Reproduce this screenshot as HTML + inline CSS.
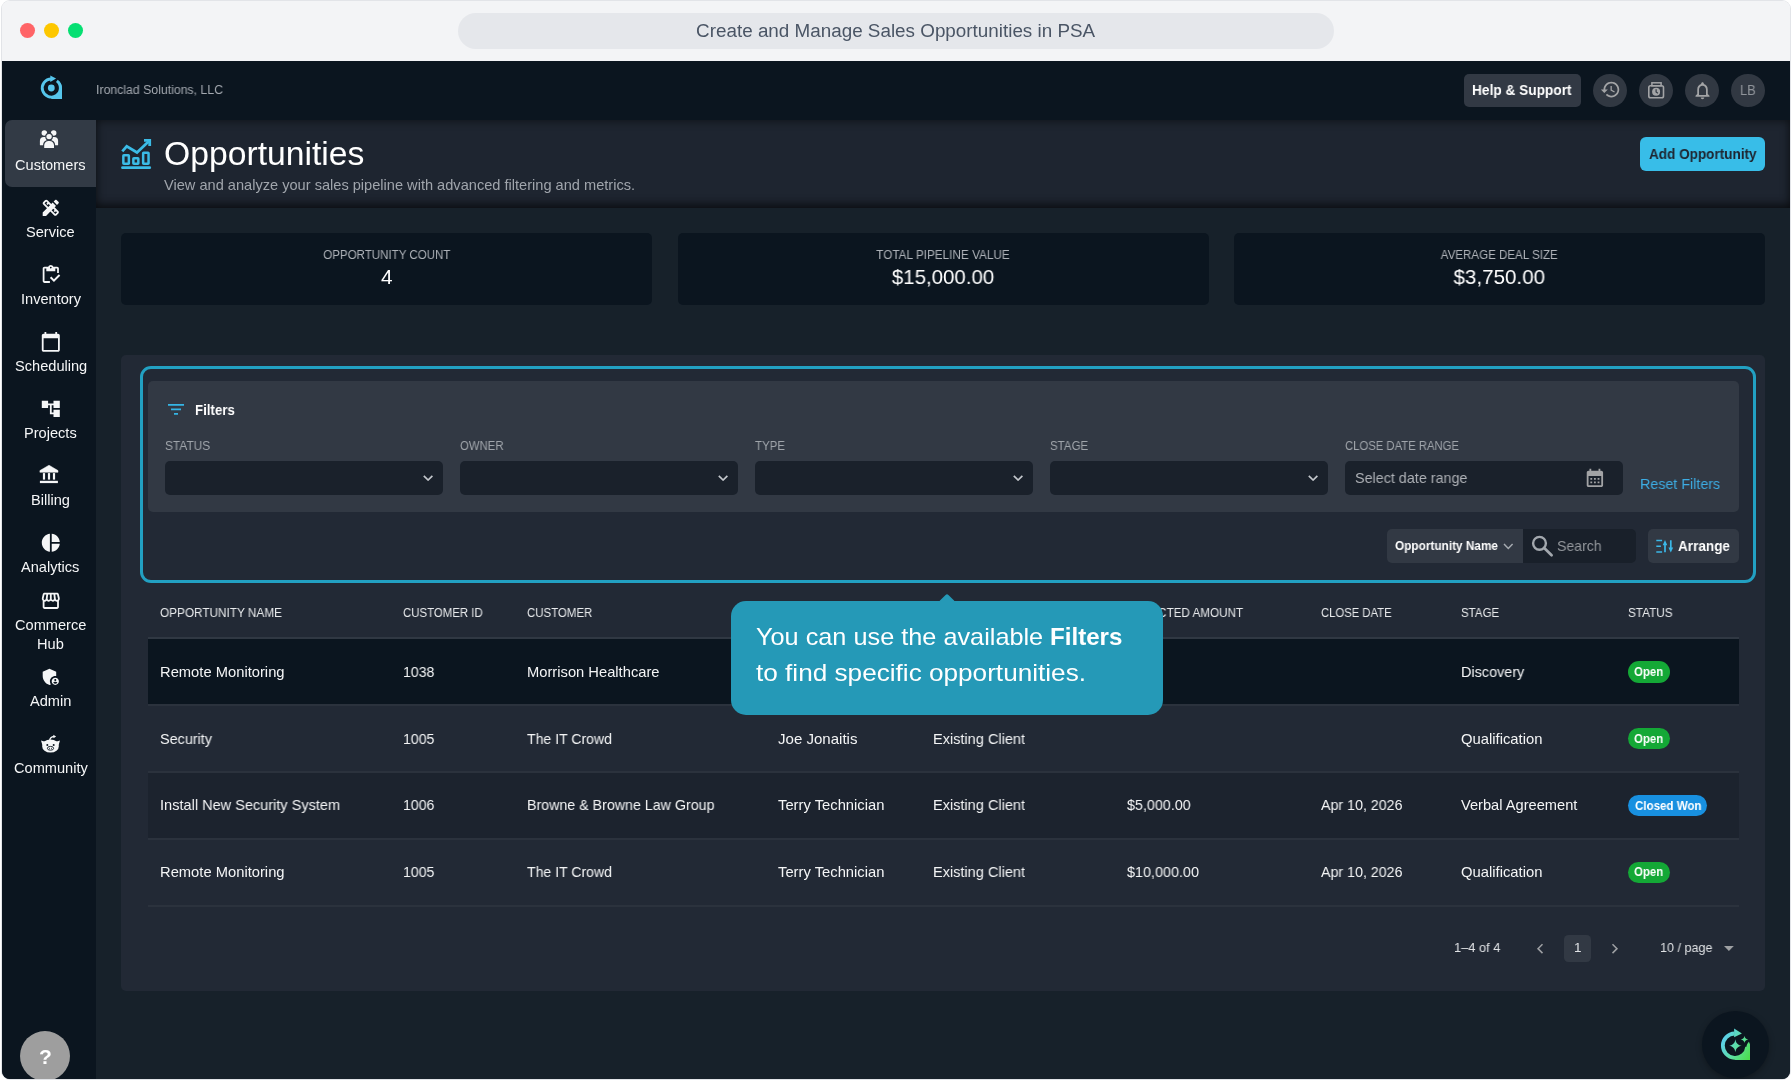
<!DOCTYPE html>
<html><head><meta charset="utf-8"><title>Opportunities</title>
<style>
html,body{margin:0;padding:0;}
body{width:1792px;height:1080px;overflow:hidden;background:#fff;font-family:"Liberation Sans",sans-serif;position:relative;}
.b{position:absolute;box-sizing:border-box;}
.t{position:absolute;white-space:nowrap;display:block;will-change:transform;}
#win{position:absolute;left:2px;top:1px;width:1788px;height:1077.5px;border-radius:8px;overflow:hidden;background:linear-gradient(#f3f4f6 0,#f3f4f6 60px,#0b151f 60px,#0b151f 100%);box-shadow:0 0 0 1px #e2e4e8;}
#in{position:absolute;left:-2px;top:-1px;width:1792px;height:1080px;}
</style></head><body>
<div id="win"><div id="in">
<div class="b" style="left:0px;top:0px;width:1792px;height:61px;background:#f3f4f6;border-radius:0px;"></div>
<div class="b" style="left:19.7px;top:22.7px;width:15.5px;height:15.5px;background:#ff6467;border-radius:8px;"></div>
<div class="b" style="left:43.7px;top:22.7px;width:15.5px;height:15.5px;background:#fdc700;border-radius:8px;"></div>
<div class="b" style="left:67.7px;top:22.7px;width:15.5px;height:15.5px;background:#05df72;border-radius:8px;"></div>
<div class="b" style="left:458px;top:13px;width:876px;height:36px;background:#e5e7eb;border-radius:18px;"></div>
<span class="t" style="left:705.38px;top:19.50px;font-size:18px;line-height:23px;color:#4a5565;font-weight:400;transform:scaleX(1.0466);transform-origin:center center;">Create and Manage Sales Opportunities in PSA</span>
<div class="b" style="left:0px;top:61px;width:1792px;height:59px;background:#0b151f;border-radius:0px;"></div>
<div class="b" style="left:0px;top:120px;width:96px;height:960px;background:#0b151f;border-radius:0px;"></div>
<div class="b" style="left:96px;top:120px;width:1696px;height:960px;background:#17212a;border-radius:0px;"></div>
<span class="t" style="left:96.40px;top:82.00px;font-size:12.5px;line-height:16px;color:#a4a9b0;font-weight:400;transform:scaleX(0.9826);transform-origin:left center;">Ironclad Solutions, LLC</span>
<div class="b" style="left:1464px;top:74px;width:117px;height:33px;background:#323944;border-radius:5px;"></div>
<span class="t" style="left:1472.40px;top:80.50px;font-size:14.6px;line-height:19px;color:#fff;font-weight:700;transform:scaleX(0.9374);transform-origin:left center;">Help &amp; Support</span>
<div class="b" style="left:1593.2px;top:73.5px;width:33.6px;height:33.6px;background:#313842;border-radius:17px;"></div>
<div class="b" style="left:1639.2px;top:73.5px;width:33.6px;height:33.6px;background:#313842;border-radius:17px;"></div>
<div class="b" style="left:1685.2px;top:73.5px;width:33.6px;height:33.6px;background:#313842;border-radius:17px;"></div>
<div class="b" style="left:1731.2px;top:73.5px;width:33.6px;height:33.6px;background:#313842;border-radius:17px;"></div>
<span class="t" style="left:1739.37px;top:80.50px;font-size:14.6px;line-height:19px;color:#90949a;font-weight:400;transform:scaleX(0.8959);transform-origin:center center;">LB</span>
<div class="b" style="left:96px;top:120px;width:1694px;height:87.9px;background:#1e2530;border-radius:0px;box-shadow:inset 0 0 9px 1px rgba(0,0,0,.5),inset 0 -9px 10px -5px rgba(0,0,0,.38);"></div>
<span class="t" style="left:164.20px;top:132.00px;font-size:33.3px;line-height:43px;color:#fff;font-weight:400;transform:scaleX(1.0118);transform-origin:left center;">Opportunities</span>
<span class="t" style="left:163.60px;top:175.50px;font-size:14.6px;line-height:19px;color:#a0a5ac;font-weight:400;transform:scaleX(0.9999);transform-origin:left center;">View and analyze your sales pipeline with advanced filtering and metrics.</span>
<div class="b" style="left:1640px;top:137px;width:125px;height:34px;background:#38bde8;border-radius:6px;"></div>
<span class="t" style="left:1648.60px;top:144.50px;font-size:14.6px;line-height:19px;color:#1e2530;font-weight:700;transform:scaleX(0.9278);transform-origin:left center;">Add Opportunity</span>
<div class="b" style="left:121.0px;top:233px;width:531.4px;height:71.5px;background:#0b151f;border-radius:5px;"></div>
<span class="t" style="left:317.83px;top:247.00px;font-size:12.5px;line-height:16px;color:#aeb2b8;font-weight:400;transform:scaleX(0.9234);transform-origin:center center;">OPPORTUNITY COUNT</span>
<span class="t" style="left:380.92px;top:263.00px;font-size:20.8px;line-height:27px;color:#fff;font-weight:400;transform:scaleX(1.0000);transform-origin:center center;">4</span>
<div class="b" style="left:677.5px;top:233px;width:531.4px;height:71.5px;background:#0b151f;border-radius:5px;"></div>
<span class="t" style="left:872.22px;top:247.00px;font-size:12.5px;line-height:16px;color:#aeb2b8;font-weight:400;transform:scaleX(0.9411);transform-origin:center center;">TOTAL PIPELINE VALUE</span>
<span class="t" style="left:891.15px;top:263.00px;font-size:20.8px;line-height:27px;color:#fff;font-weight:400;transform:scaleX(0.9836);transform-origin:center center;">$15,000.00</span>
<div class="b" style="left:1234.0px;top:233px;width:531.4px;height:71.5px;background:#0b151f;border-radius:5px;"></div>
<span class="t" style="left:1436.48px;top:247.00px;font-size:12.5px;line-height:16px;color:#aeb2b8;font-weight:400;transform:scaleX(0.9254);transform-origin:center center;">AVERAGE DEAL SIZE</span>
<span class="t" style="left:1453.43px;top:263.00px;font-size:20.8px;line-height:27px;color:#fff;font-weight:400;transform:scaleX(0.9888);transform-origin:center center;">$3,750.00</span>
<div class="b" style="left:121.3px;top:355px;width:1643.7px;height:636px;background:#222935;border-radius:5px;"></div>
<div class="b" style="left:140px;top:366.3px;width:1616.2px;height:216.9px;background:transparent;border-radius:11px;border:3.2px solid #22a0c2;"></div>
<div class="b" style="left:148px;top:381px;width:1590.5px;height:131px;background:#323944;border-radius:5px;"></div>
<span class="t" style="left:195.30px;top:400.50px;font-size:14.6px;line-height:19px;color:#fff;font-weight:700;transform:scaleX(0.9084);transform-origin:left center;">Filters</span>
<span class="t" style="left:165.40px;top:438.00px;font-size:12.5px;line-height:16px;color:#a0a5ab;font-weight:400;transform:scaleX(0.9545);transform-origin:left center;">STATUS</span>
<div class="b" style="left:165px;top:461px;width:278px;height:34px;background:#1a212b;border-radius:5px;"></div>
<span class="t" style="left:460.40px;top:438.00px;font-size:12.5px;line-height:16px;color:#a0a5ab;font-weight:400;transform:scaleX(0.9079);transform-origin:left center;">OWNER</span>
<div class="b" style="left:460px;top:461px;width:278px;height:34px;background:#1a212b;border-radius:5px;"></div>
<span class="t" style="left:755.40px;top:438.00px;font-size:12.5px;line-height:16px;color:#a0a5ab;font-weight:400;transform:scaleX(0.9189);transform-origin:left center;">TYPE</span>
<div class="b" style="left:755px;top:461px;width:278px;height:34px;background:#1a212b;border-radius:5px;"></div>
<span class="t" style="left:1050.40px;top:438.00px;font-size:12.5px;line-height:16px;color:#a0a5ab;font-weight:400;transform:scaleX(0.9217);transform-origin:left center;">STAGE</span>
<div class="b" style="left:1050px;top:461px;width:278px;height:34px;background:#1a212b;border-radius:5px;"></div>
<span class="t" style="left:1345.40px;top:438.00px;font-size:12.5px;line-height:16px;color:#a0a5ab;font-weight:400;transform:scaleX(0.9034);transform-origin:left center;">CLOSE DATE RANGE</span>
<div class="b" style="left:1345px;top:461px;width:278px;height:34px;background:#1a212b;border-radius:5px;"></div>
<span class="t" style="left:1354.80px;top:468.50px;font-size:14.6px;line-height:19px;color:#aeb1b6;font-weight:400;transform:scaleX(0.9830);transform-origin:left center;">Select date range</span>
<span class="t" style="left:1639.60px;top:474.50px;font-size:14.6px;line-height:19px;color:#3dade4;font-weight:400;transform:scaleX(0.9787);transform-origin:left center;">Reset Filters</span>
<div class="b" style="left:1387px;top:529px;width:135.6px;height:33.6px;background:#323944;border-radius:0px;border-radius:5px 0 0 5px;"></div>
<span class="t" style="left:1395.30px;top:538.00px;font-size:12.5px;line-height:16px;color:#fff;font-weight:700;transform:scaleX(0.9446);transform-origin:left center;">Opportunity Name</span>
<div class="b" style="left:1522.6px;top:529px;width:113px;height:33.6px;background:#19202a;border-radius:0px;border-radius:0 5px 5px 0;"></div>
<span class="t" style="left:1557.30px;top:536.50px;font-size:14.6px;line-height:19px;color:#93979c;font-weight:400;transform:scaleX(0.9662);transform-origin:left center;">Search</span>
<div class="b" style="left:1648.2px;top:529px;width:90.6px;height:33.6px;background:#323944;border-radius:5px;"></div>
<span class="t" style="left:1678.00px;top:536.50px;font-size:14.6px;line-height:19px;color:#fff;font-weight:700;transform:scaleX(0.9288);transform-origin:left center;">Arrange</span>
<span class="t" style="left:160.00px;top:605.00px;font-size:12.5px;line-height:16px;color:#e8eaec;font-weight:400;transform:scaleX(0.9426);transform-origin:left center;">OPPORTUNITY NAME</span>
<span class="t" style="left:402.80px;top:605.00px;font-size:12.5px;line-height:16px;color:#e8eaec;font-weight:400;transform:scaleX(0.9132);transform-origin:left center;">CUSTOMER ID</span>
<span class="t" style="left:527.00px;top:605.00px;font-size:12.5px;line-height:16px;color:#e8eaec;font-weight:400;transform:scaleX(0.9158);transform-origin:left center;">CUSTOMER</span>
<span class="t" style="left:778.50px;top:605.00px;font-size:12.5px;line-height:16px;color:#e8eaec;font-weight:400;transform:scaleX(0.9079);transform-origin:left center;">OWNER</span>
<span class="t" style="left:933.00px;top:605.00px;font-size:12.5px;line-height:16px;color:#e8eaec;font-weight:400;transform:scaleX(0.9189);transform-origin:left center;">TYPE</span>
<span class="t" style="left:1127.00px;top:605.00px;font-size:12.5px;line-height:16px;color:#e8eaec;font-weight:400;transform:scaleX(0.9330);transform-origin:left center;">EXPECTED AMOUNT</span>
<span class="t" style="left:1320.90px;top:605.00px;font-size:12.5px;line-height:16px;color:#e8eaec;font-weight:400;transform:scaleX(0.9021);transform-origin:left center;">CLOSE DATE</span>
<span class="t" style="left:1461.00px;top:605.00px;font-size:12.5px;line-height:16px;color:#e8eaec;font-weight:400;transform:scaleX(0.9217);transform-origin:left center;">STAGE</span>
<span class="t" style="left:1628.30px;top:605.00px;font-size:12.5px;line-height:16px;color:#e8eaec;font-weight:400;transform:scaleX(0.9419);transform-origin:left center;">STATUS</span>
<div class="b" style="left:147.7px;top:637px;width:1591px;height:2px;background:#303843;border-radius:0px;"></div>
<div class="b" style="left:147.7px;top:639px;width:1591px;height:65.45000000000005px;background:#0b151f;border-radius:0px;"></div>
<div class="b" style="left:147.7px;top:704.45px;width:1591px;height:2px;background:#2b323d;border-radius:0px;"></div>
<span class="t" style="left:160.00px;top:662.50px;font-size:14.6px;line-height:19px;color:#f4f5f6;font-weight:400;transform:scaleX(1.0101);transform-origin:left center;">Remote Monitoring</span>
<span class="t" style="left:403.10px;top:662.50px;font-size:14.6px;line-height:19px;color:#f4f5f6;font-weight:400;transform:scaleX(0.9698);transform-origin:left center;">1038</span>
<span class="t" style="left:527.00px;top:662.50px;font-size:14.6px;line-height:19px;color:#f4f5f6;font-weight:400;transform:scaleX(1.0087);transform-origin:left center;">Morrison Healthcare</span>
<span class="t" style="left:1461.00px;top:662.50px;font-size:14.6px;line-height:19px;color:#f4f5f6;font-weight:400;transform:scaleX(0.9877);transform-origin:left center;">Discovery</span>
<div class="b" style="left:1628px;top:661.3px;width:42px;height:21.3px;background:#14a836;border-radius:11px;"></div>
<span class="t" style="left:1634.30px;top:664.00px;font-size:12.5px;line-height:16px;color:#fff;font-weight:700;transform:scaleX(0.9172);transform-origin:left center;">Open</span>
<div class="b" style="left:147.7px;top:706.45px;width:1591px;height:64.75px;background:#222935;border-radius:0px;"></div>
<div class="b" style="left:147.7px;top:771.2px;width:1591px;height:2px;background:#2b323d;border-radius:0px;"></div>
<span class="t" style="left:160.00px;top:729.50px;font-size:14.6px;line-height:19px;color:#f4f5f6;font-weight:400;transform:scaleX(0.9859);transform-origin:left center;">Security</span>
<span class="t" style="left:403.10px;top:729.50px;font-size:14.6px;line-height:19px;color:#f4f5f6;font-weight:400;transform:scaleX(0.9698);transform-origin:left center;">1005</span>
<span class="t" style="left:527.00px;top:729.50px;font-size:14.6px;line-height:19px;color:#f4f5f6;font-weight:400;transform:scaleX(0.9640);transform-origin:left center;">The IT Crowd</span>
<span class="t" style="left:777.70px;top:729.50px;font-size:14.6px;line-height:19px;color:#f4f5f6;font-weight:400;transform:scaleX(1.0311);transform-origin:left center;">Joe Jonaitis</span>
<span class="t" style="left:932.70px;top:729.50px;font-size:14.6px;line-height:19px;color:#f4f5f6;font-weight:400;transform:scaleX(0.9945);transform-origin:left center;">Existing Client</span>
<span class="t" style="left:1461.00px;top:729.50px;font-size:14.6px;line-height:19px;color:#f4f5f6;font-weight:400;transform:scaleX(1.0144);transform-origin:left center;">Qualification</span>
<div class="b" style="left:1628px;top:728.05px;width:42px;height:21.3px;background:#14a836;border-radius:11px;"></div>
<span class="t" style="left:1634.30px;top:731.00px;font-size:12.5px;line-height:16px;color:#fff;font-weight:700;transform:scaleX(0.9172);transform-origin:left center;">Open</span>
<div class="b" style="left:147.7px;top:773.2px;width:1591px;height:64.75px;background:#1c232e;border-radius:0px;"></div>
<div class="b" style="left:147.7px;top:837.95px;width:1591px;height:2px;background:#2b323d;border-radius:0px;"></div>
<span class="t" style="left:160.00px;top:795.50px;font-size:14.6px;line-height:19px;color:#f4f5f6;font-weight:400;transform:scaleX(0.9959);transform-origin:left center;">Install New Security System</span>
<span class="t" style="left:403.10px;top:795.50px;font-size:14.6px;line-height:19px;color:#f4f5f6;font-weight:400;transform:scaleX(0.9698);transform-origin:left center;">1006</span>
<span class="t" style="left:527.00px;top:795.50px;font-size:14.6px;line-height:19px;color:#f4f5f6;font-weight:400;transform:scaleX(0.9749);transform-origin:left center;">Browne &amp; Browne Law Group</span>
<span class="t" style="left:777.70px;top:795.50px;font-size:14.6px;line-height:19px;color:#f4f5f6;font-weight:400;transform:scaleX(1.0121);transform-origin:left center;">Terry Technician</span>
<span class="t" style="left:932.70px;top:795.50px;font-size:14.6px;line-height:19px;color:#f4f5f6;font-weight:400;transform:scaleX(0.9945);transform-origin:left center;">Existing Client</span>
<span class="t" style="left:1127.30px;top:795.50px;font-size:14.6px;line-height:19px;color:#f4f5f6;font-weight:400;transform:scaleX(0.9807);transform-origin:left center;">$5,000.00</span>
<span class="t" style="left:1321.00px;top:795.50px;font-size:14.6px;line-height:19px;color:#f4f5f6;font-weight:400;transform:scaleX(0.9748);transform-origin:left center;">Apr 10, 2026</span>
<span class="t" style="left:1461.00px;top:795.50px;font-size:14.6px;line-height:19px;color:#f4f5f6;font-weight:400;transform:scaleX(1.0028);transform-origin:left center;">Verbal Agreement</span>
<div class="b" style="left:1628px;top:794.8px;width:79.2px;height:21.3px;background:#1890e0;border-radius:11px;"></div>
<span class="t" style="left:1634.50px;top:798.00px;font-size:12.5px;line-height:16px;color:#fff;font-weight:700;transform:scaleX(0.9237);transform-origin:left center;">Closed Won</span>
<div class="b" style="left:147.7px;top:839.95px;width:1591px;height:64.75px;background:#222935;border-radius:0px;"></div>
<div class="b" style="left:147.7px;top:904.7px;width:1591px;height:2px;background:#2b323d;border-radius:0px;"></div>
<span class="t" style="left:160.00px;top:862.50px;font-size:14.6px;line-height:19px;color:#f4f5f6;font-weight:400;transform:scaleX(1.0101);transform-origin:left center;">Remote Monitoring</span>
<span class="t" style="left:403.10px;top:862.50px;font-size:14.6px;line-height:19px;color:#f4f5f6;font-weight:400;transform:scaleX(0.9698);transform-origin:left center;">1005</span>
<span class="t" style="left:527.00px;top:862.50px;font-size:14.6px;line-height:19px;color:#f4f5f6;font-weight:400;transform:scaleX(0.9640);transform-origin:left center;">The IT Crowd</span>
<span class="t" style="left:777.70px;top:862.50px;font-size:14.6px;line-height:19px;color:#f4f5f6;font-weight:400;transform:scaleX(1.0121);transform-origin:left center;">Terry Technician</span>
<span class="t" style="left:932.70px;top:862.50px;font-size:14.6px;line-height:19px;color:#f4f5f6;font-weight:400;transform:scaleX(0.9945);transform-origin:left center;">Existing Client</span>
<span class="t" style="left:1127.30px;top:862.50px;font-size:14.6px;line-height:19px;color:#f4f5f6;font-weight:400;transform:scaleX(0.9853);transform-origin:left center;">$10,000.00</span>
<span class="t" style="left:1321.00px;top:862.50px;font-size:14.6px;line-height:19px;color:#f4f5f6;font-weight:400;transform:scaleX(0.9748);transform-origin:left center;">Apr 10, 2026</span>
<span class="t" style="left:1461.00px;top:862.50px;font-size:14.6px;line-height:19px;color:#f4f5f6;font-weight:400;transform:scaleX(1.0144);transform-origin:left center;">Qualification</span>
<div class="b" style="left:1628px;top:861.55px;width:42px;height:21.3px;background:#14a836;border-radius:11px;"></div>
<span class="t" style="left:1634.30px;top:864.00px;font-size:12.5px;line-height:16px;color:#fff;font-weight:700;transform:scaleX(0.9172);transform-origin:left center;">Open</span>
<span class="t" style="left:1453.60px;top:938.50px;font-size:13.5px;line-height:18px;color:#e0e2e5;font-weight:400;transform:scaleX(0.9510);transform-origin:left center;">1–4 of 4</span>
<div class="b" style="left:1564.3px;top:935px;width:26.6px;height:27px;background:#323944;border-radius:4.5px;"></div>
<span class="t" style="left:1573.85px;top:938.50px;font-size:13.5px;line-height:18px;color:#e0e2e5;font-weight:400;transform:scaleX(1.0000);transform-origin:center center;">1</span>
<span class="t" style="left:1659.80px;top:938.50px;font-size:13.5px;line-height:18px;color:#e0e2e5;font-weight:400;transform:scaleX(0.9325);transform-origin:left center;">10 / page</span>
<div class="b" style="left:941px;top:596px;width:12px;height:12px;background:#2599b7;border-radius:2px;transform:rotate(45deg);"></div>
<div class="b" style="left:731px;top:601px;width:432px;height:113.6px;background:#2599b7;border-radius:15px;"></div>
<span class="t" style="left:755.60px;top:621.00px;font-size:24px;line-height:31px;color:#fff;font-weight:400;transform:scaleX(1.0532);transform-origin:left center;">You can use the available </span>
<span class="t" style="left:1049.80px;top:621.00px;font-size:24px;line-height:31px;color:#fff;font-weight:700;transform:scaleX(1.0052);transform-origin:left center;">Filters</span>
<span class="t" style="left:755.80px;top:657.00px;font-size:24px;line-height:31px;color:#fff;font-weight:400;transform:scaleX(1.0897);transform-origin:left center;">to find specific opportunities.</span>
<div class="b" style="left:20px;top:1030.8px;width:50px;height:50px;background:#9e9e9e;border-radius:25px;"></div>
<span class="t" style="left:38.59px;top:1043.00px;font-size:21px;line-height:27px;color:#fff;font-weight:700;transform:scaleX(1.0000);transform-origin:center center;">?</span>
<div class="b" style="left:1702px;top:1011px;width:67px;height:67px;background:#0b151f;border-radius:34px;box-shadow:0 2px 6px rgba(0,0,0,.3);"></div>
<div class="b" style="left:5px;top:120px;width:91px;height:67px;background:#323a45;border-radius:0px;border-radius:7px 0 0 7px;"></div>
<span class="t" style="left:15.41px;top:155.50px;font-size:14.6px;line-height:19px;color:#f5f6f7;font-weight:400;transform:scaleX(1.0000);transform-origin:center center;">Customers</span>
<svg class="b" style="left:40px;top:196.9px;" width="21.6" height="21.6" viewBox="0 0 24 24"><path fill="#f5f6f7" d="M16.24 11.51l1.57-1.57-3.75-3.75-1.57 1.57-4.14-4.13c-.78-.78-2.05-.78-2.83 0l-1.9 1.9c-.78.78-.78 2.05 0 2.83l4.13 4.13L3 17.25V21h3.750l4.760-4.760 4.130 4.130c.95.95 2.23.6 2.83 0l1.9-1.9c.78-.78.78-2.05 0-2.83l-4.130-4.130zm-7.060-.440L5.040 6.940l1.890-1.900L8.200 6.310 7.020 7.500l1.410 1.410 1.190-1.190 1.450 1.450-1.890 1.900zm7.880 7.890l-4.130-4.130 1.900-1.900 1.450 1.450-1.190 1.190 1.410 1.410 1.190-1.190 1.270 1.270-1.900 1.900zM20.710 7.040c.39-.39.39-1.020 0-1.410l-2.340-2.340c-.47-.47-1.120-.29-1.410 0l-1.830 1.830 3.750 3.750 1.830-1.830z"/></svg>
<span class="t" style="left:26.36px;top:222.50px;font-size:14.6px;line-height:19px;color:#f5f6f7;font-weight:400;transform:scaleX(1.0000);transform-origin:center center;">Service</span>
<svg class="b" style="left:40px;top:263.9px;" width="21.6" height="21.6" viewBox="0 0 24 24"><path fill="#f5f6f7" d="M5 5h2v3h10V5h2v5h2V5c0-1.100-.9-2-2-2h-4.180C14.400 1.840 13.300 1 12 1s-2.400.84-2.820 2H5c-1.100 0-2 .9-2 2v14c0 1.100.9 2 2 2h6v-2H5V5zm7-2c.55 0 1 .45 1 1s-.45 1-1 1-1-.45-1-1 .45-1 1-1z M21 11.500l-5.490 5.500-3.010-3-1.500 1.500 4.510 4.500 6.990-7z"/></svg>
<span class="t" style="left:20.67px;top:289.50px;font-size:14.6px;line-height:19px;color:#f5f6f7;font-weight:400;transform:scaleX(1.0000);transform-origin:center center;">Inventory</span>
<svg class="b" style="left:40px;top:330.9px;" width="21.6" height="21.6" viewBox="0 0 24 24"><path fill="#f5f6f7" d="M20 3h-1V1h-2v2H7V1H5v2H4c-1.100 0-2 .9-2 2v16c0 1.100.9 2 2 2h16c1.100 0 2-.9 2-2V5c0-1.100-.9-2-2-2zm0 18H4V8h16v13z"/></svg>
<span class="t" style="left:14.58px;top:356.50px;font-size:14.6px;line-height:19px;color:#f5f6f7;font-weight:400;transform:scaleX(1.0000);transform-origin:center center;">Scheduling</span>
<svg class="b" style="left:40px;top:397.9px;" width="21.6" height="21.6" viewBox="0 0 24 24"><path fill="#f5f6f7" d="M22 11V3h-7v3H9V3H2v8h7V8h2v10h4v3h7v-8h-7v3h-2V8h2v3z"/></svg>
<span class="t" style="left:24.33px;top:423.50px;font-size:14.6px;line-height:19px;color:#f5f6f7;font-weight:400;transform:scaleX(1.0000);transform-origin:center center;">Projects</span>
<span class="t" style="left:31.22px;top:490.50px;font-size:14.6px;line-height:19px;color:#f5f6f7;font-weight:400;transform:scaleX(1.0000);transform-origin:center center;">Billing</span>
<svg class="b" style="left:40px;top:531.9px;" width="21.6" height="21.6" viewBox="0 0 24 24"><path fill="#f5f6f7" d="M11 2v20c-5.070-.5-9-4.790-9-10s3.930-9.500 9-10zm2.030 0v8.990H22c-.47-4.740-4.240-8.520-8.970-8.990zm0 11.010V22c4.740-.47 8.500-4.250 8.970-8.990h-8.970z"/></svg>
<span class="t" style="left:21.49px;top:557.50px;font-size:14.6px;line-height:19px;color:#f5f6f7;font-weight:400;transform:scaleX(1.0000);transform-origin:center center;">Analytics</span>
<svg class="b" style="left:40px;top:590.2px;" width="21.6" height="21.6" viewBox="0 0 24 24"><path fill="#f5f6f7" d="M21.900 8.890l-1.050-4.370c-.22-.9-1-1.520-1.910-1.520H5.050c-.9 0-1.690.63-1.900 1.520L2.100 8.890c-.24 1.020-.02 2.060.62 2.880.8.110.19.190.28.290V19c0 1.100.9 2 2 2h14c1.100 0 2-.9 2-2v-6.940c.09-.09.2-.18.280-.28.640-.82.870-1.870.620-2.890zm-2.990-3.900l1.050 4.370c.1.420.01.840-.25 1.170-.14.180-.44.470-.94.470-.61 0-1.140-.49-1.210-1.140L16.980 5l1.930-.010zM13 5h1.960l.54 4.520c.05.39-.07.78-.33 1.070-.22.260-.54.410-.95.410-.67 0-1.220-.59-1.220-1.310V5zM8.490 9.520L9.040 5H11v4.690c0 .72-.55 1.310-1.290 1.310-.34 0-.65-.15-.89-.41-.25-.29-.37-.68-.33-1.070zm-4.450-.160L5.050 5h1.970l-.58 4.860c-.08.65-.6 1.140-1.210 1.140-.49 0-.8-.29-.93-.47-.27-.32-.36-.75-.26-1.170zM5 19v-6.030c.08.010.15.030.23.030.87 0 1.660-.36 2.240-.95.600.6 1.400.95 2.310.95.870 0 1.650-.36 2.230-.93.590.57 1.390.93 2.290.93.840 0 1.640-.35 2.240-.95.580.59 1.370.95 2.240.95.080 0 .150-.02.230-.03V19H5z"/></svg>
<span class="t" style="left:14.80px;top:615.50px;font-size:14.6px;line-height:19px;color:#f5f6f7;font-weight:400;transform:scaleX(1.0000);transform-origin:center center;">Commerce</span>
<span class="t" style="left:37.11px;top:634.50px;font-size:14.6px;line-height:19px;color:#f5f6f7;font-weight:400;transform:scaleX(1.0000);transform-origin:center center;">Hub</span>
<svg class="b" style="left:40px;top:665.9px;" width="21.6" height="21.6" viewBox="0 0 24 24"><path fill="#f5f6f7" d="M17 11c.34 0 .67.04 1 .09V6.270L10.500 3 3 6.270v4.910c0 4.540 3.200 8.790 7.500 9.820.55-.13 1.080-.32 1.600-.55-.69-.98-1.100-2.170-1.100-3.450 0-3.310 2.690-6 6-6z M17 13c-2.210 0-4 1.790-4 4s1.790 4 4 4 4-1.790 4-4-1.790-4-4-4zm0 1.380c.62 0 1.120.51 1.120 1.120s-.51 1.120-1.120 1.120-1.120-.51-1.120-1.120.5-1.120 1.120-1.120zm0 5.370c-.93 0-1.740-.46-2.240-1.170.05-.72 1.510-1.080 2.240-1.080s2.190.36 2.240 1.080c-.5.710-1.310 1.170-2.240 1.170z"/></svg>
<span class="t" style="left:30.01px;top:691.50px;font-size:14.6px;line-height:19px;color:#f5f6f7;font-weight:400;transform:scaleX(1.0000);transform-origin:center center;">Admin</span>
<span class="t" style="left:13.79px;top:758.50px;font-size:14.6px;line-height:19px;color:#f5f6f7;font-weight:400;transform:scaleX(1.0000);transform-origin:center center;">Community</span>
<svg class="b" style="left:38px;top:129px;" width="24" height="21" viewBox="38 129 24 21">
<circle cx="44.3" cy="133.1" r="2.75" fill="#f5f6f7"/><circle cx="53.7" cy="133.1" r="2.75" fill="#f5f6f7"/>
<path d="M39.9 145.2v-4.2a4 4 0 0 1 4-4h2.8v8.200z" fill="#f5f6f7"/>
<path d="M58.100 145.200v-4.200a4 4 0 0 0-4-4h-2.800v8.200z" fill="#f5f6f7"/>
<circle cx="49.100" cy="136.600" r="3.300" fill="#f5f6f7" stroke="#323a45" stroke-width="1.200"/>
<path d="M43.600 148.600v-3.300a5 5 0 0 1 5-5h1a5 5 0 0 1 5 5v3.300z" fill="#f5f6f7" stroke="#323a45" stroke-width="1.200"/>
</svg>
<svg class="b" style="left:38px;top:463px;" width="24" height="22" viewBox="38 463 24 22">
<path d="M39.900 470.600L49 465.200l9 5.400v1.700H39.900z" fill="#f5f6f7" stroke="#f5f6f7" stroke-width=".5" stroke-linejoin="round"/>
<rect x="42.900" y="473.100" width="2.200" height="6.500" fill="#f5f6f7"/><rect x="47.900" y="473.100" width="2.200" height="6.500" fill="#f5f6f7"/><rect x="52.900" y="473.100" width="2.200" height="6.500" fill="#f5f6f7"/>
<rect x="39.900" y="480.800" width="18" height="2.300" fill="#f5f6f7"/>
</svg>
<svg class="b" style="left:38px;top:732px;" width="26" height="24" viewBox="38 732 26 24">
<path d="M41 740.500l4.200 1.200a9 6.500 0 0 1 10.600 0l4.200-1.200-1.300 4.300a9 7.200 0 0 1-16.400 0z" fill="#f5f6f7"/>
<ellipse cx="50.500" cy="746" rx="8.400" ry="6.600" fill="#f5f6f7"/>
<path d="M49.500 741c.3-2.600 1.800-4.300 4.600-4.500" stroke="#f5f6f7" stroke-width="1.300" fill="none"/>
<path d="M53.300 734.800l2.800 1.700-2.600 1.700z" fill="#f5f6f7"/>
<circle cx="47.300" cy="745" r="1" fill="#0b151f"/><circle cx="53.700" cy="745" r="1" fill="#0b151f"/>
<ellipse cx="50.500" cy="748.300" rx="3.100" ry="1.900" fill="none" stroke="#0b151f" stroke-width=".9"/>
<circle cx="49.500" cy="748.300" r=".5" fill="#0b151f"/><circle cx="51.500" cy="748.300" r=".5" fill="#0b151f"/>
</svg>
<svg class="b" style="left:38px;top:73px;" width="28" height="28" viewBox="38 73 28 28">
<path d="M51.300 78.950a9.050 9.050 0 1 0 5.570 1.920" fill="none" stroke="#56c6ec" stroke-width="2.900"/>
<path d="M50.300 75.500l5.800 3.100-5.800 3.400z" fill="#56c6ec"/>
<path d="M60.800 88a9.500 9.500 0 0 1-9.500 9.500v1.400H62V88z" fill="#56c6ec"/>
<path d="M58.600 80.800c2.300 2.100 3.400 4.500 3.400 7.400h-2.500z" fill="#56c6ec"/>
<circle cx="51.300" cy="88" r="3.400" fill="#56c6ec"/>
</svg>
<svg class="b" style="left:1599.5px;top:79px;" width="21" height="21" viewBox="0 0 24 24"><path fill="#a3a4a6" d="M13 3c-4.970 0-9 4.030-9 9H1l3.890 3.890.07.14L9 12H6c0-3.870 3.130-7 7-7s7 3.130 7 7-3.130 7-7 7c-1.930 0-3.680-.79-4.940-2.060l-1.420 1.420C8.270 19.990 10.510 21 13 21c4.970 0 9-4.030 9-9s-4.030-9-9-9zm-1 5v5l4.280 2.540.72-1.210-3.500-2.080V8H12z"/></svg>
<svg class="b" style="left:1646px;top:80px;" width="20" height="20" viewBox="1646 80 20 20">
<rect x="1651.900" y="82.800" width="9.200" height="3" fill="none" stroke="#a3a4a6" stroke-width="1.500"/>
<rect x="1648.800" y="85.800" width="14.700" height="11.900" rx="1.800" fill="none" stroke="#a3a4a6" stroke-width="1.600"/>
<circle cx="1656.100" cy="91.800" r="4" fill="#a3a4a6"/>
<path d="M1656.100 89.300v2.700l1.800 1.200" stroke="#323943" stroke-width="1.200" fill="none"/>
</svg>
<svg class="b" style="left:1692.1px;top:79.6px;" width="21" height="21" viewBox="0 0 24 24"><path fill="#a3a4a6" d="M12 22c1.100 0 2-.9 2-2h-4c0 1.100.9 2 2 2zm6-6v-5c0-3.070-1.630-5.640-4.500-6.320V4c0-.83-.67-1.500-1.500-1.500s-1.500.67-1.500 1.500v.68C7.640 5.360 6 7.920 6 11v5l-2 2v1h16v-1l-2-2zm-2 1H8v-6c0-2.480 1.510-4.500 4-4.500s4 2.020 4 4.500v6z"/></svg>
<svg class="b" style="left:118px;top:135px;" width="36" height="38" viewBox="118 135 36 38">
<g fill="none" stroke="#3bbbe6" stroke-width="2.700" stroke-linejoin="round">
<path d="M122.500 167.700h27.200" stroke-linecap="round" stroke-width="2.800"/>
<g stroke-width="2.500" stroke-linejoin="miter"><rect x="123.350" y="155.350" width="5.500" height="8.400" rx=".5"/>
<rect x="133.350" y="158.150" width="5" height="5.600" rx=".5"/>
<rect x="143.150" y="152.750" width="5.400" height="11" rx=".5"/></g>
<path d="M122.300 151.300l4.400-5 10.300 6.200 11.800-11.300" stroke-linejoin="miter"/>
<path d="M144 140.300h5.700v5.700" stroke-linejoin="miter" stroke-width="2.800"/>
</g></svg>
<svg class="b" style="left:168px;top:404px;" width="16" height="11" viewBox="0 0 16 11"><path d="M0 .900h16M3 5.400h10M6 9.900h4" stroke="#35b5e5" stroke-width="1.800" fill="none"/></svg>
<svg class="b" style="left:423.2px;top:474.6px;" width="10.2" height="6.2" viewBox="0 0 10.200 6.200"><path d="M.8.800l4.300 4.200L9.400.8" stroke="#c3c7cc" stroke-width="1.700" fill="none"/></svg>
<svg class="b" style="left:718.2px;top:474.6px;" width="10.2" height="6.2" viewBox="0 0 10.200 6.200"><path d="M.8.800l4.300 4.200L9.400.8" stroke="#c3c7cc" stroke-width="1.700" fill="none"/></svg>
<svg class="b" style="left:1013.2px;top:474.6px;" width="10.2" height="6.2" viewBox="0 0 10.200 6.200"><path d="M.8.800l4.300 4.200L9.400.8" stroke="#c3c7cc" stroke-width="1.700" fill="none"/></svg>
<svg class="b" style="left:1308.2px;top:474.6px;" width="10.2" height="6.2" viewBox="0 0 10.200 6.200"><path d="M.8.800l4.300 4.200L9.400.8" stroke="#c3c7cc" stroke-width="1.700" fill="none"/></svg>
<svg class="b" style="left:1584.1px;top:467.1px;" width="21.8" height="21.8" viewBox="0 0 24 24"><path fill="#a2a3a5" d="M19 4h-1V2h-2v2H8V2H6v2H5c-1.110 0-1.990.9-1.990 2L3 20c0 1.100.89 2 2 2h14c1.100 0 2-.9 2-2V6c0-1.100-.9-2-2-2zm0 16H5V10h14v10zM9 14H7v-2h2v2zm4 0h-2v-2h2v2zm4 0h-2v-2h2v2zm-8 4H7v-2h2v2zm4 0h-2v-2h2v2zm4 0h-2v-2h2v2z"/></svg>
<svg class="b" style="left:1503px;top:542.8px;" width="11" height="7" viewBox="0 0 11 7"><path d="M1 1l4.300 4.400L9.600 1" stroke="#a6abb1" stroke-width="1.500" fill="none"/></svg>
<svg class="b" style="left:1531px;top:534.5px;" width="23" height="23" viewBox="0 0 23 23"><circle cx="8.500" cy="8.300" r="6.400" fill="none" stroke="#a3a8ae" stroke-width="2.400"/><path d="M13.200 13l7.400 7.300" stroke="#a3a8ae" stroke-width="2.700" stroke-linecap="round"/></svg>
<svg class="b" style="left:1655px;top:539px;" width="20" height="15" viewBox="0 0 20 15">
<g stroke="#3bb8e8" stroke-width="1.500" fill="none">
<path d="M1.300 1.600h5.800M1.300 7.300h4.600M1.300 13h5.800"/>
<path d="M10 13.300V4.500M15.800 1.200v8.800" stroke-width="1.700"/>
</g>
<path d="M7.700 6.200L10 1l2.300 5.200zM13.400 8.400h4.800L15.800 13.600z" fill="#3bb8e8"/></svg>
<svg class="b" style="left:1535.7px;top:942.7px;" width="8" height="11.3" viewBox="0 0 8 11.300"><path d="M6.500 1.200L2 5.650l4.500 4.450" stroke="#9ea0a3" stroke-width="1.500" fill="none"/></svg>
<svg class="b" style="left:1611.4px;top:942.7px;" width="8" height="11.3" viewBox="0 0 8 11.300"><path d="M1.500 1.200L6 5.650l-4.500 4.450" stroke="#9ea0a3" stroke-width="1.500" fill="none"/></svg>
<svg class="b" style="left:1724.4px;top:945.9px;" width="10" height="5" viewBox="0 0 10 5"><path d="M0 0h9.800L4.900 5z" fill="#9ea0a3"/></svg>
<svg class="b" style="left:1716px;top:1024px;" width="40" height="40" viewBox="1716 1024 40 40">
<defs><linearGradient id="ag" gradientUnits="userSpaceOnUse" x1="1721" y1="1040" x2="1750" y2="1056"><stop offset="0" stop-color="#5bcdf0"/><stop offset=".5" stop-color="#5ddfa6"/><stop offset="1" stop-color="#4cdc4e"/></linearGradient></defs>
<path d="M1734.600 1033.500a12.200 12.200 0 1 0 12.600 13.400" fill="none" stroke="url(#ag)" stroke-width="3.800"/>
<g fill="url(#ag)">
<path d="M1734.100 1028.600l7.800 4.800-7.800 3.900z"/>
<path d="M1735.100 1060.100H1750V1044.200l-1.100-2.400c-1.500 1.700-2.300 3.400-2.600 5.600a11.500 11.500 0 0 1-11.200 10z"/>
<path d="M1735.400 1039.200c.5 3.600 2.200 5.700 6.300 6.500-4.100.8-5.800 2.900-6.300 6.500-.5-3.600-2.200-5.700-6.300-6.500 4.100-.8 5.800-2.900 6.300-6.500z"/>
<path d="M1744.500 1035.800c.3 2.100 1.300 3.200 3.700 3.600-2.400.4-3.400 1.500-3.700 3.600-.3-2.100-1.300-3.200-3.700-3.600 2.400-.4 3.400-1.500 3.700-3.600z"/>
</g></svg>

</div></div>
</body></html>
